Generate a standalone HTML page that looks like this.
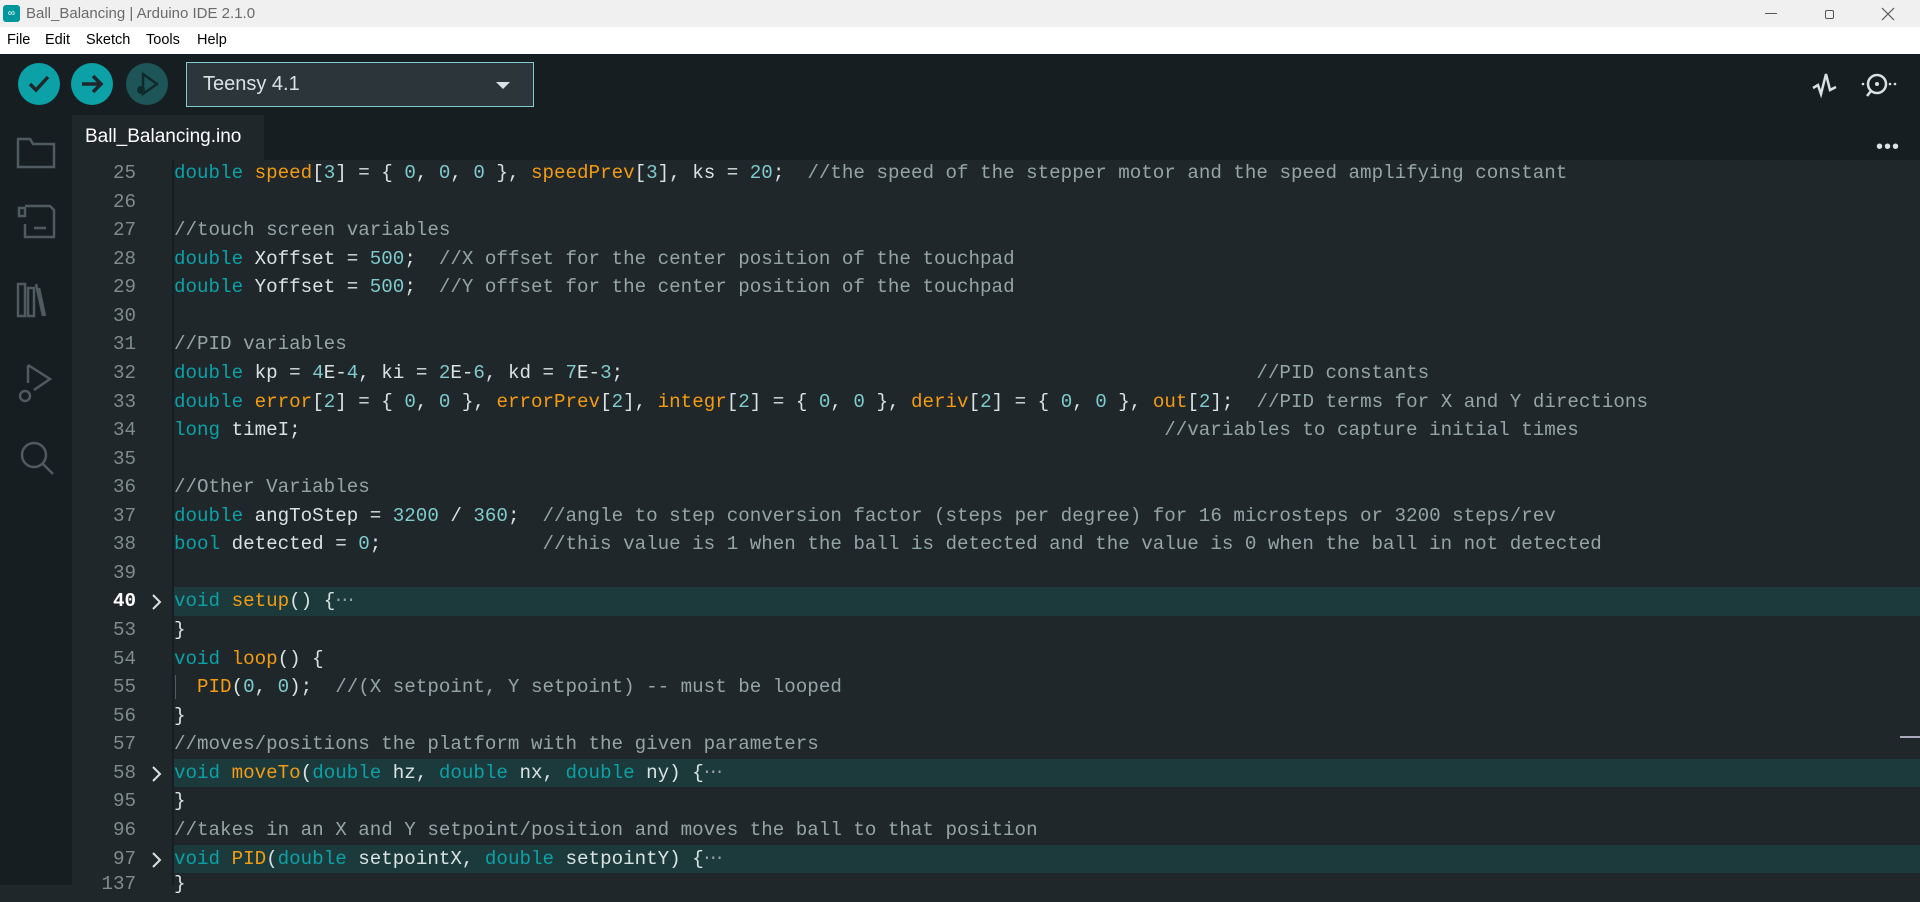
<!DOCTYPE html>
<html><head><meta charset="utf-8"><style>
*{margin:0;padding:0;box-sizing:border-box}
body{width:1920px;height:885px;overflow:hidden;background:#1f272a;font-family:"Liberation Sans",sans-serif;position:relative}
#title{position:absolute;left:0;top:0;width:1920px;height:27px;background:#f0f0f0;color:#6a6a6a;font-size:15px}
#menu{position:absolute;left:0;top:27px;width:1920px;height:27px;background:#fff;color:#000;font-size:14.5px}
#menu span{position:absolute;top:5px}
#tool{position:absolute;left:0;top:54px;width:1920px;height:61px;background:#171e21}
.btn{position:absolute;width:42px;height:42px;border-radius:50%;top:63px;background:#0ca1a6}
#side{position:absolute;left:0;top:115px;width:72px;height:770px;background:#171e21}
#tabbar{position:absolute;left:72px;top:115px;width:1848px;height:45px;background:#171e21}
#tab{position:absolute;left:72px;top:115px;width:192px;height:45px;background:#1f272a;color:#fff;font-size:19px;padding:11px 0 0 13px}
#code{position:absolute;left:0;top:159px;width:1920px;font-family:"Liberation Mono",monospace;font-size:19.2px;color:#dae3e3}
.l{height:28.57px;line-height:28.57px;position:relative;white-space:pre}
.n{position:absolute;left:72px;width:64px;text-align:right;color:#7f8c8d}
.t{position:absolute;left:174px}
.hl{position:absolute;left:174px;right:0;top:0;bottom:0;background:#1c3a3c}
.k{color:#0ca1a6}.f{color:#f39c12}.d{color:#7fcbcd}.c{color:#95a5a6}
.ar{position:absolute;left:150px;top:7px}
</style></head><body>
<div id="title">
<div style="position:absolute;left:3px;top:5px;width:17px;height:17px;border-radius:3px;background:#00979c;color:#fff;font-size:10px;text-align:center;line-height:17px">∞</div>
<span style="position:absolute;left:26px;top:5px">Ball_Balancing | Arduino IDE 2.1.0</span>
<div style="position:absolute;left:1765px;top:13px;width:12px;height:1px;background:#555"></div>
<div style="position:absolute;left:1825px;top:10px;width:9px;height:9px;border:1px solid #555;border-radius:2px"></div>
<svg style="position:absolute;left:1881px;top:7px" width="14" height="14"><path d="M1 1L13 13M13 1L1 13" stroke="#555" stroke-width="1.2"/></svg>
</div>
<div id="menu"><span style="left:7px">File</span><span style="left:45px">Edit</span><span style="left:86px">Sketch</span><span style="left:146px">Tools</span><span style="left:197px">Help</span></div>
<div id="tool">
<div style="position:absolute;left:186px;top:8px;width:348px;height:45px;border:1px solid #7fcbcd;background:#2c353a;color:#dae3e3;font-size:20px;padding:10px 0 0 16px">Teensy 4.1
<div style="position:absolute;right:23px;top:19px;border-left:7px solid transparent;border-right:7px solid transparent;border-top:7px solid #dae3e3"></div></div>
<svg style="position:absolute;left:1810px;top:14px" width="34" height="34"><path d="M3 20L8 17L11 26L16 6L20 22L26 19" stroke="#dae3e3" stroke-width="2.5" fill="none"/></svg>
<svg style="position:absolute;left:1858px;top:13px" width="40" height="36"><circle cx="19" cy="17" r="9" stroke="#dae3e3" stroke-width="2.5" fill="none"/><circle cx="19" cy="17" r="2" fill="#dae3e3"/><path d="M13 24L9 29" stroke="#dae3e3" stroke-width="2.5"/><circle cx="5" cy="17" r="1.3" fill="#dae3e3"/><circle cx="32" cy="17" r="1.3" fill="#dae3e3"/><circle cx="37" cy="17" r="1.3" fill="#dae3e3"/></svg>
</div>
<div class="btn" style="left:18px"><svg width="42" height="42"><path d="M12 21L18 27L30 14" stroke="#1f272a" stroke-width="3.5" fill="none"/></svg></div>
<div class="btn" style="left:71px"><svg width="42" height="42"><path d="M11 21H30M22 13L30 21L22 29" stroke="#1f272a" stroke-width="3.5" fill="none"/></svg></div>
<div class="btn" style="left:126px;background:#1e5558"><svg width="42" height="42"><path d="M17 11V31L31 21Z" stroke="#0f2a2c" stroke-width="2.5" fill="none"/><circle cx="15" cy="27" r="4" fill="#0f2a2c"/></svg></div>
<div id="side">
<svg style="position:absolute;left:16px;top:20px" width="42" height="200" fill="none" stroke="#4f5b61" stroke-width="2.5">
<path d="M2 4H14L17 9H38V32H2Z"/>
<path d="M3 73H9V81H3ZM9 71H34L38 75V102H9V89M18 93H30"/>
<path d="M2 149V181H9V149ZM12 153V181H18V153ZM20 149L27 181M23 153L29 181"/>
</svg>
<svg style="position:absolute;left:16px;top:248px" width="42" height="120" fill="none" stroke="#4f5b61" stroke-width="2.5">
<path d="M12 2V20M12 2L34 16L18 27"/><circle cx="9" cy="33" r="5"/>
<circle cx="18" cy="92" r="12"/><path d="M27 101L37 111"/>
</svg>
</div>
<div id="tabbar"></div>
<div id="tab">Ball_Balancing.ino</div>
<div style="position:absolute;left:1876px;top:136px;color:#dae3e3;font-size:20px;letter-spacing:1px">•••</div>
<div style="position:absolute;left:172px;top:160px;width:2px;height:725px;background:#171e21"></div>
<div style="position:absolute;left:1900px;top:736px;width:20px;height:2px;background:#aab"></div>
<div id="code">
<div class="l"><span class="n">25</span><span class="t"><span class="k">double</span> <span class="f">speed</span>[<span class="d">3</span>] = { <span class="d">0</span>, <span class="d">0</span>, <span class="d">0</span> }, <span class="f">speedPrev</span>[<span class="d">3</span>], ks = <span class="d">20</span>;  <span class="c">//the speed of the stepper motor and the speed amplifying constant</span></span></div>
<div class="l"><span class="n">26</span></div>
<div class="l"><span class="n">27</span><span class="t c">//touch screen variables</span></div>
<div class="l"><span class="n">28</span><span class="t"><span class="k">double</span> Xoffset = <span class="d">500</span>;  <span class="c">//X offset for the center position of the touchpad</span></span></div>
<div class="l"><span class="n">29</span><span class="t"><span class="k">double</span> Yoffset = <span class="d">500</span>;  <span class="c">//Y offset for the center position of the touchpad</span></span></div>
<div class="l"><span class="n">30</span></div>
<div class="l"><span class="n">31</span><span class="t c">//PID variables</span></div>
<div class="l"><span class="n">32</span><span class="t"><span class="k">double</span> kp = <span class="d">4</span>E-<span class="d">4</span>, ki = <span class="d">2</span>E-<span class="d">6</span>, kd = <span class="d">7</span>E-<span class="d">3</span>;                                                       <span class="c">//PID constants</span></span></div>
<div class="l"><span class="n">33</span><span class="t"><span class="k">double</span> <span class="f">error</span>[<span class="d">2</span>] = { <span class="d">0</span>, <span class="d">0</span> }, <span class="f">errorPrev</span>[<span class="d">2</span>], <span class="f">integr</span>[<span class="d">2</span>] = { <span class="d">0</span>, <span class="d">0</span> }, <span class="f">deriv</span>[<span class="d">2</span>] = { <span class="d">0</span>, <span class="d">0</span> }, <span class="f">out</span>[<span class="d">2</span>];  <span class="c">//PID terms for X and Y directions</span></span></div>
<div class="l"><span class="n">34</span><span class="t"><span class="k">long</span> timeI;                                                                           <span class="c">//variables to capture initial times</span></span></div>
<div class="l"><span class="n">35</span></div>
<div class="l"><span class="n">36</span><span class="t c">//Other Variables</span></div>
<div class="l"><span class="n">37</span><span class="t"><span class="k">double</span> angToStep = <span class="d">3200</span> / <span class="d">360</span>;  <span class="c">//angle to step conversion factor (steps per degree) for 16 microsteps or 3200 steps/rev</span></span></div>
<div class="l"><span class="n">38</span><span class="t"><span class="k">bool</span> detected = <span class="d">0</span>;              <span class="c">//this value is 1 when the ball is detected and the value is 0 when the ball in not detected</span></span></div>
<div class="l"><span class="n">39</span></div>
<div class="l"><div class="hl"></div><span class="n" style="color:#fff;font-weight:bold">40</span><svg class="ar" width="14" height="16"><path d="M3 1L10 8L3 15" stroke="#dae3e3" stroke-width="2" fill="none"/></svg><span class="t"><span class="k">void</span> <span class="f">setup</span>() {<span class="c">⋯</span></span></div>
<div class="l"><span class="n">53</span><span class="t">}</span></div>
<div class="l"><span class="n">54</span><span class="t"><span class="k">void</span> <span class="f">loop</span>() {</span></div>
<div class="l"><span class="n">55</span><span class="t">  <span class="f">PID</span>(<span class="d">0</span>, <span class="d">0</span>);  <span class="c">//(X setpoint, Y setpoint) -- must be looped</span></span><span style="position:absolute;left:175px;top:2px;width:1px;height:24px;background:#4f5b61"></span></div>
<div class="l"><span class="n">56</span><span class="t">}</span></div>
<div class="l"><span class="n">57</span><span class="t c">//moves/positions the platform with the given parameters</span></div>
<div class="l"><div class="hl"></div><span class="n">58</span><svg class="ar" width="14" height="16"><path d="M3 1L10 8L3 15" stroke="#dae3e3" stroke-width="2" fill="none"/></svg><span class="t"><span class="k">void</span> <span class="f">moveTo</span>(<span class="k">double</span> hz, <span class="k">double</span> nx, <span class="k">double</span> ny) {<span class="c">⋯</span></span></div>
<div class="l"><span class="n">95</span><span class="t">}</span></div>
<div class="l"><span class="n">96</span><span class="t c">//takes in an X and Y setpoint/position and moves the ball to that position</span></div>
<div class="l"><div class="hl"></div><span class="n">97</span><svg class="ar" width="14" height="16"><path d="M3 1L10 8L3 15" stroke="#dae3e3" stroke-width="2" fill="none"/></svg><span class="t"><span class="k">void</span> <span class="f">PID</span>(<span class="k">double</span> setpointX, <span class="k">double</span> setpointY) {<span class="c">⋯</span></span></div>
<div class="l" style="top:-3px"><span class="n">137</span><span class="t">}</span></div>
</div>
</body></html>
